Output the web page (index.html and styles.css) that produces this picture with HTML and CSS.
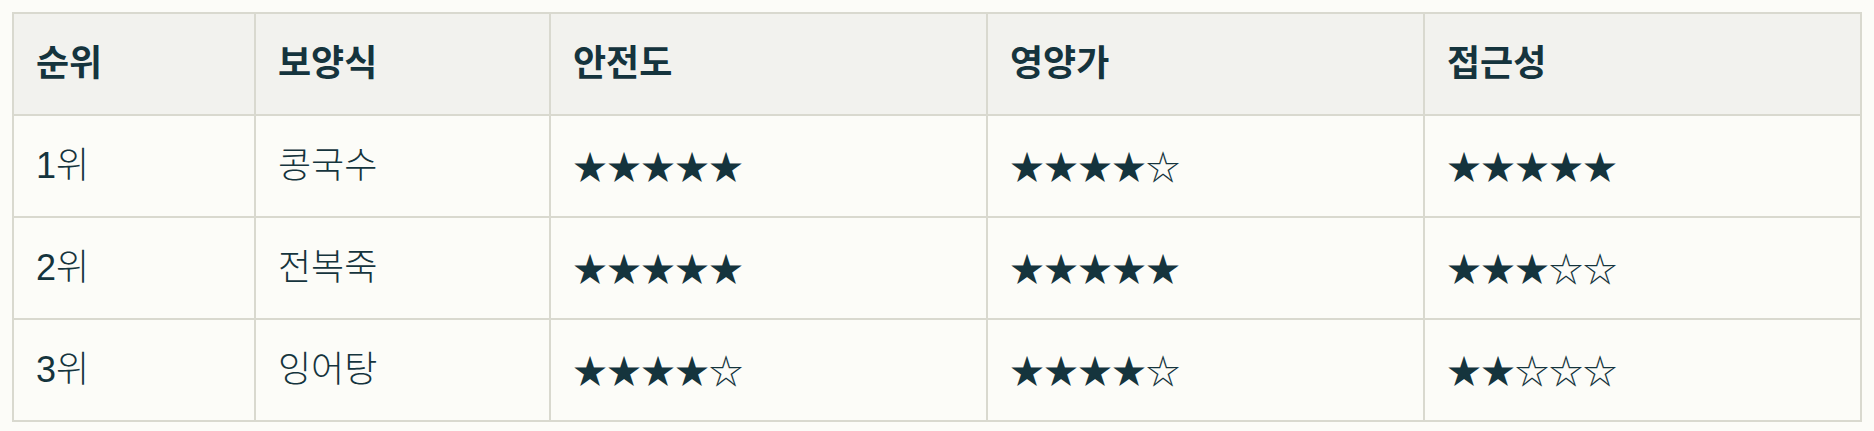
FILE: index.html
```html
<!DOCTYPE html>
<html lang="ko">
<head>
<meta charset="utf-8">
<title>보양식 순위</title>
<link rel="stylesheet" href="styles.css">
</head>
<body>
<table class="rank-table">
  <colgroup>
    <col class="c-rank">
    <col class="c-name">
    <col class="c-score">
    <col class="c-score">
    <col class="c-score">
  </colgroup>
  <thead>
    <tr>
      <th>순위</th>
      <th>보양식</th>
      <th>안전도</th>
      <th>영양가</th>
      <th>접근성</th>
    </tr>
  </thead>
  <tbody>
    <tr>
      <td>1위</td>
      <td>콩국수</td>
      <td class="stars">★★★★★</td>
      <td class="stars">★★★★☆</td>
      <td class="stars">★★★★★</td>
    </tr>
    <tr>
      <td>2위</td>
      <td>전복죽</td>
      <td class="stars">★★★★★</td>
      <td class="stars">★★★★★</td>
      <td class="stars">★★★☆☆</td>
    </tr>
    <tr>
      <td>3위</td>
      <td>잉어탕</td>
      <td class="stars">★★★★☆</td>
      <td class="stars">★★★★☆</td>
      <td class="stars">★★☆☆☆</td>
    </tr>
  </tbody>
</table>
</body>
</html>
```

FILE: styles.css
```css
html, body {
  background: #fcfcf8;
}
body {
  margin: 12px;
  font-family: "Liberation Sans", "Noto Sans CJK KR", sans-serif;
  color: #15343d;
}
.rank-table {
  width: 1850px;
  border-collapse: collapse;
  table-layout: fixed;
  font-size: 36px;
}
.c-rank { width: 242px; }
.c-name { width: 295px; }
.c-score { width: 437px; }
.rank-table th,
.rank-table td {
  border: 2px solid #d9d9cf;
  padding: 30px 22px;
  line-height: 40px;
  height: 40px;
  text-align: left;
  vertical-align: middle;
}
.rank-table th {
  background: #f2f2ee;
  font-weight: 700;
}
.rank-table td {
  background: #fcfcf8;
  font-weight: 300;
}
.rank-table td.stars {
  font-family: "Noto Sans CJK KR", sans-serif;
  font-size: 34px;
  font-weight: 400;
}
```
